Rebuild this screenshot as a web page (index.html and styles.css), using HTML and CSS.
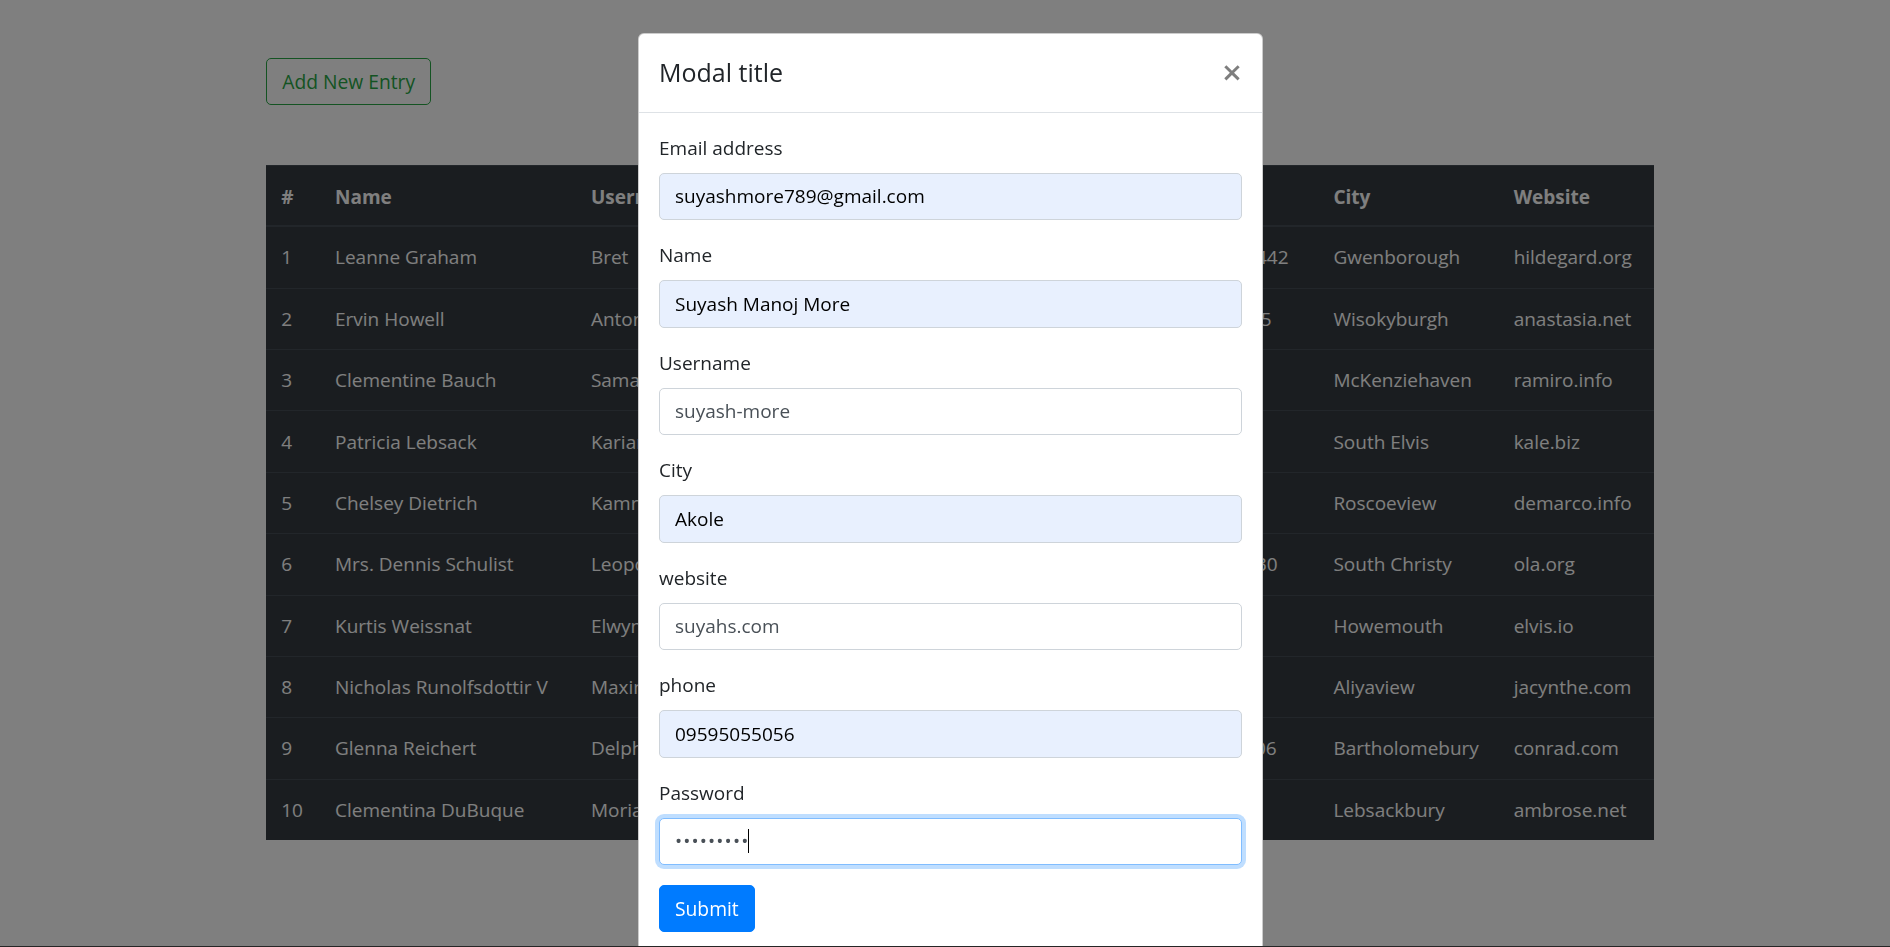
FILE: index.html
```html
<!DOCTYPE html>
<html lang="en">
<head>
<meta charset="utf-8">
<title>Users</title>
<link rel="stylesheet" href="styles.css">
</head>
<body>
<div class="frame">
  <main class="container">
    <button class="btn btn-outline-success" type="button">Add New Entry</button>
    <table class="table table-dark">
      <colgroup>
        <col class="c-id"><col class="c-name"><col class="c-user"><col class="c-email"><col class="c-phone"><col class="c-city"><col class="c-web">
      </colgroup>
      <thead>
        <tr><th>#</th><th>Name</th><th>Username</th><th>Email</th><th>Phone</th><th>City</th><th>Website</th></tr>
      </thead>
      <tbody>
        <tr><td>1</td><td>Leanne Graham</td><td>Bret</td><td>Sincere@april.biz</td><td>1-770-736-8031 x56442</td><td>Gwenborough</td><td>hildegard.org</td></tr>
        <tr><td>2</td><td>Ervin Howell</td><td>Antonette</td><td>Shanna@melissa.tv</td><td>010-692-6593 x09125</td><td>Wisokyburgh</td><td>anastasia.net</td></tr>
        <tr><td>3</td><td>Clementine Bauch</td><td>Samantha</td><td>Nathan@yesenia.net</td><td>1-463-123-4447</td><td>McKenziehaven</td><td>ramiro.info</td></tr>
        <tr><td>4</td><td>Patricia Lebsack</td><td>Karianne</td><td>Julianne.OConner@kory.org</td><td>493-170-9623 x156</td><td>South Elvis</td><td>kale.biz</td></tr>
        <tr><td>5</td><td>Chelsey Dietrich</td><td>Kamren</td><td>Lucio_Hettinger@annie.ca</td><td>(254)954-1289</td><td>Roscoeview</td><td>demarco.info</td></tr>
        <tr><td>6</td><td>Mrs. Dennis Schulist</td><td>Leopoldo_Corkery</td><td>Karley_Dach@jasper.info</td><td>1-477-935-8478 x6430</td><td>South Christy</td><td>ola.org</td></tr>
        <tr><td>7</td><td>Kurtis Weissnat</td><td>Elwyn.Skiles</td><td>Telly.Hoeger@billy.biz</td><td>210.067.6132</td><td>Howemouth</td><td>elvis.io</td></tr>
        <tr><td>8</td><td>Nicholas Runolfsdottir V</td><td>Maxime_Nienow</td><td>Sherwood@rosamond.me</td><td>586.493.6943 x140</td><td>Aliyaview</td><td>jacynthe.com</td></tr>
        <tr><td>9</td><td>Glenna Reichert</td><td>Delphine</td><td>Chaim_McDermott@dana.io</td><td>(775)976-6794 x41206</td><td>Bartholomebury</td><td>conrad.com</td></tr>
        <tr><td>10</td><td>Clementina DuBuque</td><td>Moriah.Stanton</td><td>Rey.Padberg@karina.biz</td><td>024-648-3804</td><td>Lebsackbury</td><td>ambrose.net</td></tr>
      </tbody>
    </table>
  </main>
</div>

<div class="backdrop"></div>

<div class="modal" role="dialog" aria-modal="true">
  <div class="modal-dialog">
    <div class="modal-content">
      <div class="modal-header">
        <h5 class="modal-title">Modal title</h5>
        <button type="button" class="close" aria-label="Close">×</button>
      </div>
      <div class="modal-body">
        <form>
          <div class="form-group">
            <label for="f-email">Email address</label>
            <input id="f-email" type="email" class="form-control autofill" value="suyashmore789@gmail.com">
          </div>
          <div class="form-group">
            <label for="f-name">Name</label>
            <input id="f-name" type="text" class="form-control autofill" value="Suyash Manoj More">
          </div>
          <div class="form-group">
            <label for="f-user">Username</label>
            <input id="f-user" type="text" class="form-control" value="suyash-more">
          </div>
          <div class="form-group">
            <label for="f-city">City</label>
            <input id="f-city" type="text" class="form-control autofill" value="Akole">
          </div>
          <div class="form-group">
            <label for="f-web">website</label>
            <input id="f-web" type="text" class="form-control" value="suyahs.com">
          </div>
          <div class="form-group">
            <label for="f-phone">phone</label>
            <input id="f-phone" type="text" class="form-control autofill" value="09595055056">
          </div>
          <div class="form-group">
            <label for="f-pass">Password</label>
            <div class="pw-field">
              <input id="f-pass" type="password" class="form-control is-focused" value="suyash123">
              <span class="caret"></span>
            </div>
          </div>
          <button type="button" class="btn btn-primary">Submit</button>
        </form>
      </div>
    </div>
  </div>
</div>

<div class="screen-edge"></div>
</body>
</html>
```

FILE: styles.css
```css
* { box-sizing: border-box; }

html {
  zoom: 1.25;
  font-size: 16px;
}

body {
  margin: 0;
  font-family: "Open Sans", "Noto Sans", sans-serif;
  font-size: 15.2px;
  line-height: 24px;
  font-weight: 400;
  color: #212529;
  background: #fff;
  overflow: hidden;
}

.frame {
  width: 1536px;
}

.container {
  width: 1140px;
  margin: 0 auto;
  padding: 46.4px 15px 0;
}

/* buttons */
.btn {
  display: inline-block;
  font-family: inherit;
  font-size: 15.4px;
  line-height: 24px;
  font-weight: 400;
  text-align: center;
  padding: 6px 12px;
  border: 1px solid transparent;
  border-radius: 4px;
  background: transparent;
  cursor: pointer;
}

.btn-outline-success {
  color: #28a745;
  border-color: #28a745;
}

.btn-primary {
  color: #fff;
  background: #007bff;
  border-color: #007bff;
}

/* table */
.table {
  width: 100%;
  margin-top: 48px;
  border-collapse: collapse;
  table-layout: fixed;
}

.table-dark {
  color: #fff;
  background: #343a40;
}

.c-id { width: 43px; }
.c-name { width: 204.7px; }
.c-user { width: 160px; }
.c-email { width: 232.5px; }
.c-phone { width: 201.5px; }
.c-city { width: 144.2px; }
.c-web { width: 124.5px; }

.table th,
.table td {
  padding: 12.15px 12px;
  text-align: left;
  vertical-align: top;
  white-space: nowrap;
  overflow: hidden;
  border-top: 1px solid #454d55;
}

.table th {
  font-weight: 700;
}

.table thead th {
  padding-top: 12.8px;
  padding-bottom: 10.6px;
  vertical-align: bottom;
  border-bottom: 2px solid #454d55;
}

/* modal */
.backdrop {
  position: fixed;
  top: 0;
  left: 0;
  right: 0;
  bottom: 0;
  background: #000;
  opacity: 0.5;
}

.modal {
  position: fixed;
  top: 0;
  left: 0;
  width: 1536px;
  height: 100%;
  padding-right: 15.2px;
  overflow: hidden;
}

.modal-dialog {
  width: 500px;
  margin: 26.4px auto 0;
}

.modal-content {
  display: flex;
  flex-direction: column;
  background: #fff;
  border: 1px solid rgba(0, 0, 0, 0.2);
  border-radius: 4.8px;
}

.modal-header {
  display: flex;
  align-items: flex-start;
  justify-content: space-between;
  padding: 16px;
  border-bottom: 1px solid #dee2e6;
}

.modal-title {
  margin: 0;
  font-size: 20px;
  line-height: 30px;
  font-weight: 500;
}

.close {
  padding: 16px;
  margin: -16px -16px -16px auto;
  background: transparent;
  border: 0;
  font-family: inherit;
  font-size: 28px;
  font-weight: 600;
  line-height: 1;
  color: #000;
  text-shadow: 0 1px 0 #fff;
  opacity: 0.5;
  cursor: pointer;
}

.modal-body {
  padding: 16px;
}

.form-group {
  margin-bottom: 16px;
}

.form-group label {
  display: inline-block;
  margin-bottom: 8px;
}

.form-control {
  display: block;
  width: 100%;
  height: 38px;
  padding: 6px 12px;
  font-family: inherit;
  font-size: 15.2px;
  line-height: 24px;
  color: #495057;
  background: #fff;
  border: 1px solid #ced4da;
  border-radius: 4px;
  outline: 0;
}

.form-control.autofill {
  background: #e8f0fe;
  color: #000;
}

.form-control.is-focused {
  border-color: #80bdff;
  box-shadow: 0 0 0 3.2px rgba(0, 123, 255, 0.25);
  letter-spacing: 0.9px;
}

.pw-field {
  position: relative;
}

.caret {
  position: absolute;
  left: 71.5px;
  top: 9.5px;
  width: 0.8px;
  height: 19px;
  background: #000;
}

.screen-edge {
  position: fixed;
  left: 0;
  right: 0;
  bottom: 0;
  height: 0.8px;
  background: #262626;
}
```
